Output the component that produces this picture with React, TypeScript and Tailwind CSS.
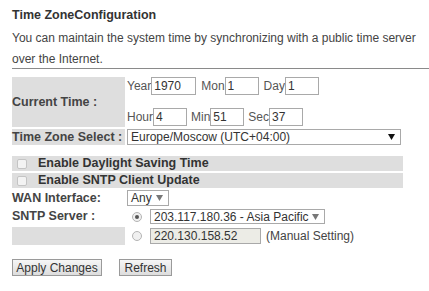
import type { ReactNode } from 'react';

const font = { fontFamily: '"Liberation Sans", Arial, sans-serif' };

function Box({ value, w }: { value: string; w: string }) {
  return (
    <div className={`${w} h-[18px] border border-[#a9a9a9] bg-white px-[2px] text-[12px] leading-[16px] whitespace-nowrap text-[#333]`}>
      {value}
    </div>
  );
}

function Dropdown({ value, w, h, arrow = 'text-[#111]' }: { value: string; w: string; h: string; arrow?: string }) {
  return (
    <div className={`${w} ${h} flex items-center justify-between border border-[#a9a9a9] bg-white pl-[3px] pr-[5px] text-[12px] whitespace-nowrap text-[#333]`}>
      <span className="leading-none">{value}</span>
      <svg width="7" height="6" viewBox="0 0 7 6" className={arrow}>
        <path d="M0 0h7L3.5 6z" fill="currentColor" />
      </svg>
    </div>
  );
}

function Check({ label }: { label: string }) {
  return (
    <tr>
      <td colSpan={2} className="h-[15px] bg-[#dedede] p-0">
        <div className="flex items-center whitespace-nowrap pl-[5px] text-[12.5px] font-bold leading-none text-[#333]">
          <span className="mr-[11px] h-[10px] w-[10px] rounded-[2px] border border-[#c4c4c4] bg-[#f3f3f3]" />
          {label}
        </div>
      </td>
    </tr>
  );
}

function Radio({ on }: { on?: boolean }) {
  return (
    <span className="ml-[5px] mr-[8px] flex h-[10px] w-[10px] shrink-0 items-center justify-center rounded-full border border-[#b4b4b4] bg-[#f0f0f0]">
      {on && <span className="h-[4px] w-[4px] rounded-full bg-[#555]" />}
    </span>
  );
}

function Field({ label, children }: { label: string; children: ReactNode }) {
  return (
    <span className="flex items-center">
      <span className="text-[12px] text-[#555]">{label}</span>
      {children}
    </span>
  );
}

const label = 'p-0 whitespace-nowrap text-[12.5px] font-bold leading-none text-[#444]';

export default function App() {
  return (
    <div className="h-[291px] w-[429px] overflow-hidden bg-white text-[#333]" style={font}>
      <h1 className="ml-[12px] pt-[7px] text-[12.5px] font-bold leading-[16px] text-[#333]">Time ZoneConfiguration</h1>
      <p className="ml-[12px] mt-[5px] w-[416px] text-[12px] leading-[21px] text-[#444]">
        You can maintain the system time by synchronizing with a public time server over the Internet.
      </p>
      <div className="ml-[12px] mt-[-2px] h-px bg-[#8a8a8a]" />

      <table className="ml-[10px] mt-[6px] w-[395px] table-fixed border-separate border-spacing-[2px]">
        <colgroup>
          <col className="w-[113px]" />
          <col />
        </colgroup>
        <tbody>
          <tr>
            <td className={`h-[50px] bg-[#dedede] ${label}`}>Current Time :</td>
            <td className="p-0 align-top">
              <div className="flex items-center gap-[5px]">
                <Field label="Year"><Box value="1970" w="w-[45px]" /></Field>
                <Field label="Mon"><Box value="1" w="w-[34px]" /></Field>
                <Field label="Day"><Box value="1" w="w-[34px]" /></Field>
              </div>
              <div className="mt-[13px] flex items-center gap-[4px]">
                <Field label="Hour"><Box value="4" w="w-[34px]" /></Field>
                <Field label="Min"><Box value="51" w="w-[34px]" /></Field>
                <Field label="Sec"><Box value="37" w="w-[34px]" /></Field>
              </div>
            </td>
          </tr>
          <tr>
            <td className={`h-[16px] bg-[#dedede] ${label}`}>Time Zone Select :</td>
            <td className="p-0">
              <Dropdown value="Europe/Moscow (UTC+04:00)" w="w-[274px]" h="h-[16px]" />
            </td>
          </tr>
          <tr>
            <td colSpan={2} className="h-[7px] p-0" />
          </tr>
          <Check label="Enable Daylight Saving Time" />
          <Check label="Enable SNTP Client Update" />
          <tr>
            <td className={`h-[16px] ${label}`}>WAN Interface:</td>
            <td className="p-0">
              <Dropdown value="Any" w="w-[42px]" h="h-[16px]" arrow="text-[#777]" />
            </td>
          </tr>
          <tr>
            <td className={`h-[17px] ${label}`}>SNTP Server :</td>
            <td className="p-0">
              <div className="flex items-center">
                <Radio on />
                <Dropdown value="203.117.180.36 - Asia Pacific" w="w-[175px]" h="h-[15px]" arrow="text-[#777]" />
              </div>
            </td>
          </tr>
          <tr>
            <td className="h-[17px] bg-[#dedede] p-0" />
            <td className="p-0">
              <div className="flex items-center whitespace-nowrap">
                <Radio />
                <div className="h-[16px] w-[111px] border border-[#a9a9a9] bg-[#ecece6] px-[3px] text-[12px] leading-[14px] text-[#333]">
                  220.130.158.52
                </div>
                <span className="ml-[5px] text-[12px] text-[#444]">(Manual Setting)</span>
              </div>
            </td>
          </tr>
        </tbody>
      </table>

      <div className="ml-[12px] mt-[12px] flex gap-[17px]">
        <button type="button" className="h-[17px] w-[90px] whitespace-nowrap border border-[#9a9a9a] bg-gradient-to-b from-[#f6f6f6] to-[#dddddd] p-0 text-[12px] leading-none text-[#333]">
          Apply Changes
        </button>
        <button type="button" className="h-[17px] w-[53px] whitespace-nowrap border border-[#9a9a9a] bg-gradient-to-b from-[#f6f6f6] to-[#dddddd] p-0 text-[12px] leading-none text-[#333]">
          Refresh
        </button>
      </div>
    </div>
  );
}
